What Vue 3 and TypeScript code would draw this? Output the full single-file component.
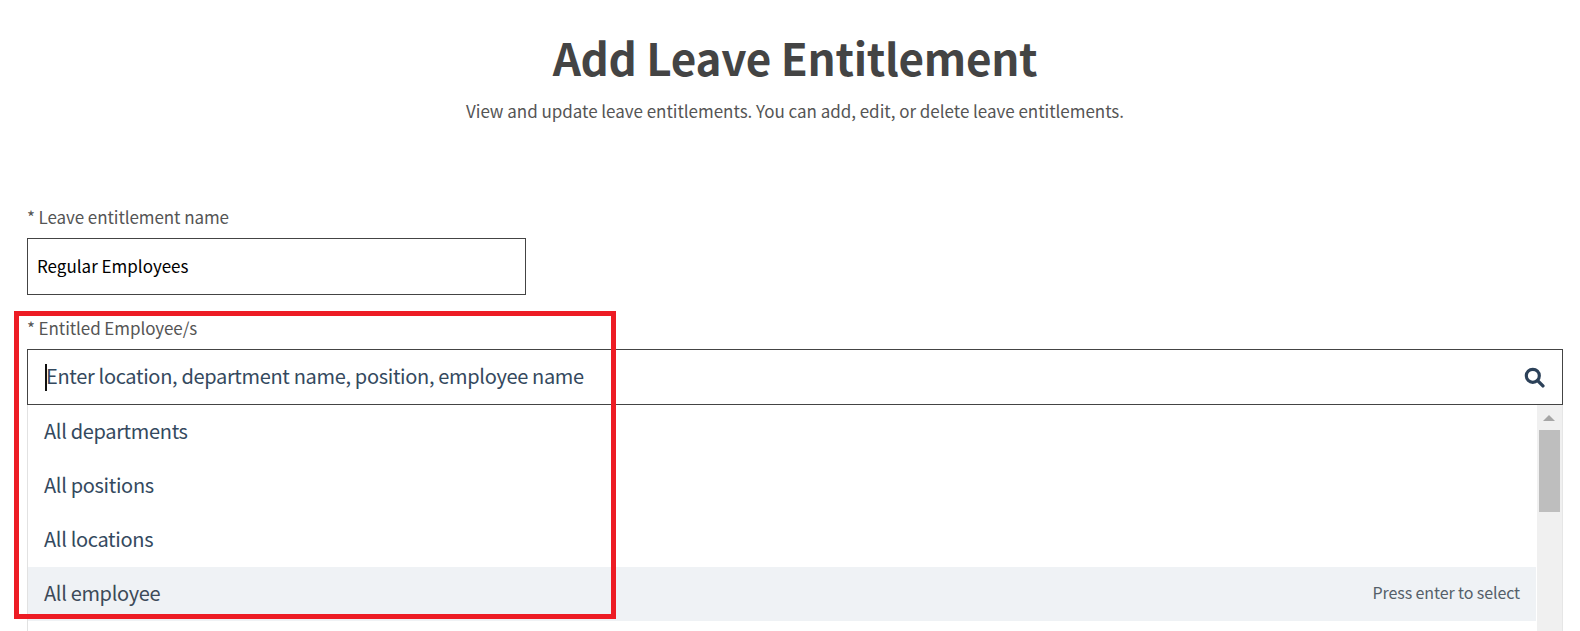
<script setup lang="ts">
const options: string[] = ['All departments', 'All positions', 'All locations', 'All employee']
const activeOption = 'All employee'
</script>

<template>
  <div class="page">
    <header class="page__header">
      <h1 class="page__title">Add Leave Entitlement</h1>
      <p class="page__subtitle">View and update leave entitlements. You can add, edit, or delete leave entitlements.</p>
    </header>

    <div class="field field--name">
      <label class="field__label">* Leave entitlement name</label>
      <input class="field__input" type="text" value="Regular Employees" readonly />
    </div>

    <div class="field field--employees">
      <label class="field__label">* Entitled Employee/s</label>
      <div class="search">
        <span class="search__caret"></span>
        <input class="search__input" type="text" placeholder="Enter location, department name, position, employee name" readonly />
        <svg class="search__icon" viewBox="0 0 20 20" aria-hidden="true">
          <circle cx="8.4" cy="8.4" r="6.2" fill="none" stroke="currentColor" stroke-width="3" />
          <path d="M13 13l5 5" fill="none" stroke="currentColor" stroke-width="3.2" stroke-linecap="round" />
        </svg>
      </div>
      <div class="list">
        <ul class="list__items">
          <li
            v-for="option in options"
            :key="option"
            class="list__item"
            :class="{ 'list__item--active': option === activeOption }"
          >
            <span>{{ option }}</span>
            <span v-if="option === activeOption" class="list__hint">Press enter to select</span>
          </li>
        </ul>
        <div class="scrollbar">
          <span class="scrollbar__arrow"></span>
          <span class="scrollbar__thumb"></span>
        </div>
      </div>
      <div class="highlight"></div>
    </div>
  </div>
</template>

<style scoped>
.page {
  height: 631px;
  overflow: hidden;
  box-sizing: border-box;
  padding: 0 17px 0 27px;
  background: #fff;
  font-family: "Noto Sans CJK SC", "Noto Sans", sans-serif;
  color: #555;
}

.page__header {
  padding-top: 27px;
  text-align: center;
}

.page__title {
  margin: 0;
  font-size: 44px;
  line-height: 60px;
  font-weight: 700;
  letter-spacing: -0.3px;
  color: #444;
}

.page__subtitle {
  margin: 11px 0 0;
  font-size: 17px;
  line-height: 26px;
  font-weight: 400;
  letter-spacing: -0.03px;
  color: #555;
}

.field--name {
  margin-top: 81px;
}

.field--employees {
  position: relative;
  margin-top: 21px;
}

.field__label {
  display: block;
  font-size: 17px;
  line-height: 24px;
  letter-spacing: -0.08px;
  color: #555;
}

.field__input {
  display: block;
  box-sizing: border-box;
  width: 499px;
  height: 57px;
  margin-top: 9px;
  padding: 0 9px 3px;
  border: 1px solid #444;
  border-radius: 0;
  outline: none;
  font: inherit;
  font-size: 17px;
  color: #000;
}

.search {
  position: relative;
  display: flex;
  align-items: center;
  box-sizing: border-box;
  height: 56px;
  margin-top: 9px;
  padding: 0 17px 0 18px;
  border: 1px solid #444;
}

.search__caret {
  position: absolute;
  left: 17px;
  top: 14px;
  width: 2px;
  height: 27px;
  background: #111;
}

.search__input {
  flex: 1;
  min-width: 0;
  padding: 0 0 4px;
  border: 0;
  outline: none;
  font: inherit;
  font-size: 20px;
  letter-spacing: -0.33px;
  background: transparent;
}

.search__input::placeholder {
  color: #34495e;
  opacity: 1;
}

.search__icon {
  width: 21px;
  height: 21px;
  color: #2c4159;
  flex-shrink: 0;
}

.list {
  display: flex;
  height: 240px;
  border-left: 1px solid #e2e2e2;
}

.list__items {
  flex: 1;
  margin: 0;
  padding: 0;
  list-style: none;
}

.list__item {
  display: flex;
  align-items: center;
  justify-content: space-between;
  box-sizing: border-box;
  height: 54px;
  padding: 0 16px 4px;
  font-size: 20px;
  letter-spacing: -0.33px;
  color: #34495e;
}

.list__item--active {
  background: #eff2f5;
  color: #3d4a58;
}

.list__hint {
  font-size: 16px;
  letter-spacing: -0.1px;
  color: #555f6a;
}

.scrollbar {
  position: relative;
  width: 26px;
  margin-left: 1px;
  background: #f0f0f0;
  border-right: 1px solid #e6e6e6;
  box-sizing: border-box;
}

.scrollbar__arrow {
  position: absolute;
  top: 10px;
  left: 6px;
  border-left: 6px solid transparent;
  border-right: 6px solid transparent;
  border-bottom: 6px solid #a6a6a6;
}

.scrollbar__thumb {
  position: absolute;
  top: 25px;
  left: 2px;
  width: 21px;
  height: 82px;
  background: #bebebe;
}

.highlight {
  position: absolute;
  left: -13px;
  top: -5px;
  width: 602px;
  height: 308px;
  box-sizing: border-box;
  border: 5px solid #ed1c24;
  pointer-events: none;
}
</style>

<style>
html,
body {
  margin: 0;
  overflow: hidden;
}
</style>
